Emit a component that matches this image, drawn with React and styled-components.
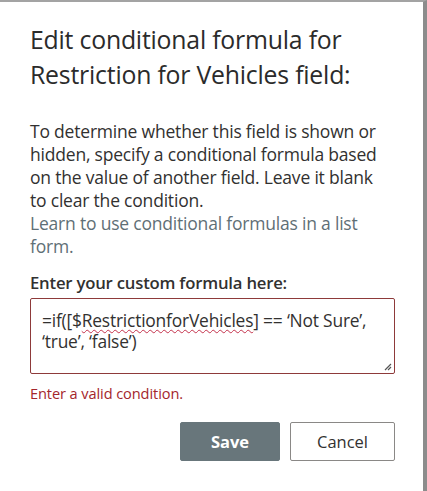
import React from "react";
import styled, { createGlobalStyle } from "styled-components";

const Global = createGlobalStyle`
  html, body { margin: 0; padding: 0; background: #ffffff; }
  * { box-sizing: border-box; }
`;

const Frame = styled.div`
  width: 427px;
  height: 491px;
  background: #ffffff;
  border-top: 2px solid #a3a3a3;
  border-right: 4px solid #8c8c8c;
  padding: 20px 28px 0 30px;
  font-family: "Open Sans", "Noto Sans", sans-serif;
  color: #323130;
  display: flex;
  flex-direction: column;
`;

const Title = styled.h1`
  margin: 0;
  font-size: 24.8px;
  font-weight: 400;
  line-height: 35px;
  letter-spacing: -0.2px;
  color: #2b2b2b;
`;

const Description = styled.div`
  margin-top: 28px;
  width: 352px;
  font-size: 17.5px;
  line-height: 23px;
  letter-spacing: -0.2px;
  color: #323130;
`;

const Link = styled.a`
  color: #5f6f76;
  text-decoration: none;
`;

const Label = styled.label`
  margin-top: 14px;
  font-size: 16.7px;
  font-weight: 600;
  line-height: 22px;
  letter-spacing: -0.2px;
  color: #323130;
`;

const Formula = styled.div`
  margin-top: 4px;
  width: 365px;
  height: 76px;
  border: 1px solid #8e3a3a;
  border-radius: 2px;
  padding: 11px 11px;
  font-size: 17.4px;
  line-height: 21px;
  letter-spacing: -0.2px;
  color: #323130;
  position: relative;
`;

const Squiggle = styled.span`
  text-decoration: underline wavy #c4314b;
  text-decoration-thickness: 1px;
  text-underline-offset: 2px;
`;

const Grip = styled.svg`
  position: absolute;
  right: 2px;
  bottom: 2px;
`;

const ErrorText = styled.div`
  margin-top: 9px;
  font-size: 14.6px;
  line-height: 20px;
  letter-spacing: -0.1px;
  color: #a4262c;
`;

const Actions = styled.div`
  margin-top: 19px;
  display: flex;
  justify-content: flex-end;
  gap: 10px;
  width: 365px;
`;

const Button = styled.button`
  height: 39px;
  width: ${(p) => p.$w}px;
  border-radius: 2px;
  font-family: "Open Sans", "Noto Sans", sans-serif;
  font-size: 16.5px;
  font-weight: ${(p) => (p.$primary ? 700 : 400)};
  background: ${(p) => (p.$primary ? "#68767b" : "#ffffff")};
  color: ${(p) => (p.$primary ? "#ffffff" : "#323130")};
  border: 1px solid ${(p) => (p.$primary ? "#68767b" : "#8a8886")};
  padding: 0;
`;

export default function App() {
  return (
    <>
      <Global />
      <Frame>
        <Title>
          Edit conditional formula for
          <br />
          Restriction for Vehicles field:
        </Title>
        <Description>
          To determine whether this field is shown or hidden, specify a
          conditional formula based on the value of another field. Leave it
          blank to clear the condition.
          <br />
          <Link href="#">Learn to use conditional formulas in a list form.</Link>
        </Description>
        <Label>Enter your custom formula here:</Label>
        <Formula>
          =if([$<Squiggle>RestrictionforVehicles</Squiggle>] == ‘Not Sure’,
          <br />
          ‘true’, ‘false’)
          <Grip width="9" height="9" viewBox="0 0 9 9">
            <path d="M8 2 L2 8 M8 5 L5 8" stroke="#555" strokeWidth="1.2" fill="none" />
          </Grip>
        </Formula>
        <ErrorText>Enter a valid condition.</ErrorText>
        <Actions>
          <Button $primary $w={100}>Save</Button>
          <Button $w={105}>Cancel</Button>
        </Actions>
      </Frame>
    </>
  );
}
